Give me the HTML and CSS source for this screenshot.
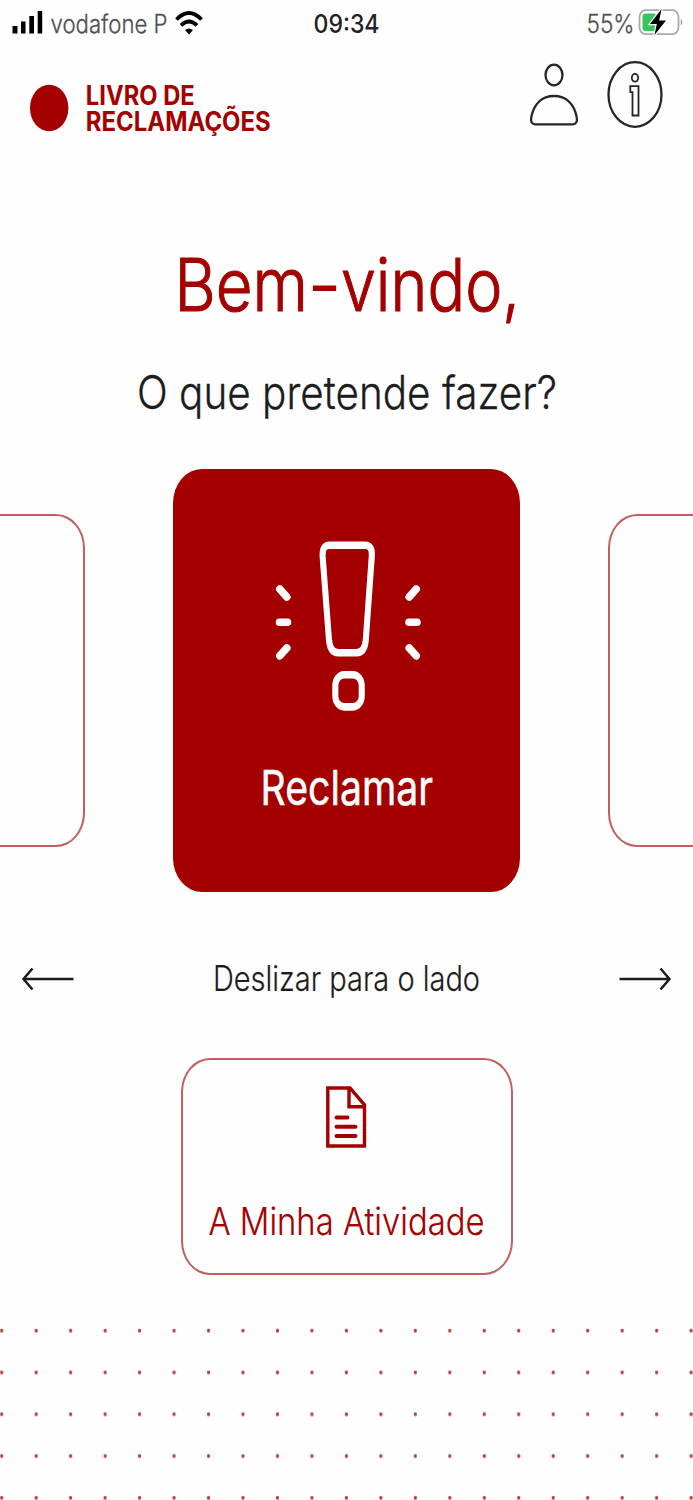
FILE: index.html
```html
<!DOCTYPE html>
<html lang="pt">
<head>
<meta charset="utf-8">
<title>Livro de Reclamações</title>
<link rel="stylesheet" href="styles.css">
</head>
<body>
<div class="screen">
  <div class="status">
    <svg class="status-left" width="220" height="48" viewBox="0 0 220 48">
      <path d="M12.500 26h5v7.500h-5zM21 21.500h4.500v12H21zM29.300 16h4.700v17.500h-4.700zM37.700 11h4.500v22.500h-4.500z"/>
      <text class="muted" x="50.500" y="32.500" font-size="25" textLength="117" lengthAdjust="spacingAndGlyphs">vodafone P</text>
      <path class="wifi" d="M176.500 19.500Q189 6.500 201.500 19.500M181 25.300Q189 17.500 197 25.300"/>
      <path d="M185 30Q189 27 193 30L189 34.500Z"/>
    </svg>
    <svg class="status-time" width="70" height="48" viewBox="0 0 70 48">
      <text class="time" x="1.500" y="32.600" font-size="25" textLength="66" lengthAdjust="spacingAndGlyphs">09:34</text>
    </svg>
    <svg class="status-right" width="110" height="48" viewBox="0 0 110 48">
      <text class="muted" x="3.500" y="32.700" font-size="25.500" textLength="48" lengthAdjust="spacingAndGlyphs">55%</text>
      <rect class="battery" x="56.500" y="10.200" width="39" height="24" rx="6" ry="7"/>
      <rect class="charge" x="59.500" y="13.500" width="14" height="17.500" rx="3"/>
      <path class="cap" d="M97.800 18.500q3 3.700 0 7.500z"/>
      <path class="bolt" d="M78.500 9L67 24h6.800L71.500 35 83 20.500h-6.800z"/>
    </svg>
  </div>

  <header class="header">
    <svg class="brand" width="260" height="70" viewBox="0 0 260 70">
      <ellipse cx="19.200" cy="38" rx="19.200" ry="23.300"/>
      <text x="55.800" y="35" font-size="26.500" textLength="109" lengthAdjust="spacingAndGlyphs">LIVRO DE</text>
      <text x="55.800" y="61" font-size="26.500" textLength="185" lengthAdjust="spacingAndGlyphs">RECLAMAÇÕES</text>
    </svg>
    <div class="actions">
      <svg class="line-icon" width="50" height="70" viewBox="0 0 50 70">
        <ellipse cx="25" cy="15" rx="8.500" ry="10.300"/>
        <path d="M6 64.300Q1 64 2.300 57C5 44 13 36 25 36S45 44 47.700 57Q49 64 44 64.300Z"/>
      </svg>
      <svg class="line-icon" width="58" height="70" viewBox="0 0 58 70">
        <ellipse cx="29" cy="34.500" rx="26.500" ry="32.300"/>
        <ellipse class="fine" cx="29" cy="17.800" rx="3.200" ry="3.900"/>
        <path class="fine" d="M24.300 26.200H32.500V55.500H26.500V32.200H24.300Z"/>
      </svg>
    </div>
  </header>

  <main class="main">
    <svg class="title" width="360" height="90" viewBox="0 0 360 90">
      <text x="7.500" y="70.500" font-size="73"><tspan textLength="133.500" lengthAdjust="spacingAndGlyphs">Bem</tspan><tspan textLength="33" lengthAdjust="spacingAndGlyphs">-</tspan><tspan textLength="179" lengthAdjust="spacingAndGlyphs">vindo,</tspan></text>
    </svg>
    <svg class="subtitle" width="440" height="60" viewBox="0 0 440 60">
      <text x="10" y="44" font-size="46" textLength="420" lengthAdjust="spacingAndGlyphs">O que pretende fazer?</text>
    </svg>

    <section class="carousel">
      <div class="side-card"></div>
      <div class="card">
        <svg class="alert" width="160" height="180" viewBox="0 0 160 180">
          <g class="mark" transform="translate(-.8 0) scale(.8 1)">
            <path d="M79 9.200H123.500Q133 9.200 132 20L124.500 104Q123 116.700 113 116.700H90Q80 116.700 78.500 104L70.500 20Q70 9.200 79 9.200Z"/>
            <rect x="86.400" y="138.700" width="33" height="32.200" rx="11"/>
          </g>
          <path class="ray" d="M12.800 53L19.800 61M12.500 86.300H20.500M19.800 112L12.800 119.800M149.200 53L142.200 61M142 86.300H150M142.200 112L149.200 119.800"/>
        </svg>
        <svg class="card-label" width="190" height="56" viewBox="0 0 190 56">
          <text x="8.500" y="42.500" font-size="48.500" textLength="172.500" lengthAdjust="spacingAndGlyphs">Reclamar</text>
        </svg>
      </div>
      <div class="side-card"></div>
    </section>

    <div class="swipe">
      <svg class="arrow" width="54" height="30" viewBox="0 0 54 30"><path d="M52.500 15H2.500M11.500 4.500L2.500 15L11.500 25.500"/></svg>
      <svg class="hint" width="280" height="48" viewBox="0 0 280 48">
        <text x="6" y="36" font-size="35" textLength="267" lengthAdjust="spacingAndGlyphs">Deslizar para o lado</text>
      </svg>
      <svg class="arrow" width="54" height="30" viewBox="0 0 54 30"><path d="M1.500 15H51.500M42.500 4.500L51.500 15L42.500 25.500"/></svg>
    </div>

    <section class="activity">
      <svg class="doc" width="41" height="62" viewBox="0 0 41 62">
        <path d="M1.800 2H24L38.500 19V60H1.800ZM23 2V20.700H38.500"/>
        <path class="doc-lines" d="M10.500 31.400H21.500M10.500 40.700H29.500M10.500 50H29.500"/>
      </svg>
      <svg class="activity-label" width="290" height="50" viewBox="0 0 290 50">
        <text x="6.500" y="37" font-size="37.500" textLength="276" lengthAdjust="spacingAndGlyphs">A Minha Atividade</text>
      </svg>
    </section>
  </main>

  <svg class="dots" width="693" height="190" viewBox="0 0 693 190">
    <defs>
      <pattern id="dot" x="-15.500" y="0" width="34.470" height="41.800" patternUnits="userSpaceOnUse">
        <ellipse cx="17.200" cy="20.700" rx="1.600" ry="2"/>
      </pattern>
    </defs>
    <rect width="693" height="190" fill="url(#dot)"/>
  </svg>
</div>
</body>
</html>
```
FILE: styles.css
```css
* { box-sizing: border-box; }
body {
  margin: 0;
  background: #fefefe;
  color: #1c1c1c;
  font-family: Inter, "Liberation Sans", sans-serif;
}
svg { display: block; flex: none; overflow: visible; }
.screen {
  width: 693px;
  height: 1500px;
  overflow: hidden;
  display: flex;
  flex-direction: column;
}
.status {
  height: 48px;
  display: grid;
  grid-template-columns: 312px 271px 110px;
}
.muted { fill: #505050; stroke: #505050; stroke-width: 0.3; font-weight: 300; }
.time { fill: #222; font-weight: 500; }
.wifi { fill: none; stroke: #000; stroke-width: 3.8; }
.battery { fill: none; stroke: #aaa; stroke-width: 1.8; }
.charge { fill: #35c759; }
.cap { fill: #999; }
.bolt { fill: #000; stroke: #fefefe; stroke-width: 2.5; paint-order: stroke; }
.header {
  height: 90px;
  padding: 12px 29px 0 30px;
  display: flex;
  justify-content: space-between;
}
.brand { fill: #a50000; font-weight: 700; margin-top: 10px; }
.actions { display: flex; gap: 27px; margin-right: 0.5px; }
.line-icon { fill: none; stroke: #262626; stroke-width: 2.3; }
.fine { stroke-width: 1.8; }
.main {
  display: flex;
  flex-direction: column;
  align-items: center;
}
.title { fill: #a50000; stroke: #a50000; stroke-width: 1.1; font-weight: 300; margin-top: 102px; }
.subtitle { fill: #1c1c1c; stroke: #1c1c1c; stroke-width: 0.3; font-weight: 300; margin-top: 35px; }
.carousel {
  width: 693px;
  margin-top: 44px;
  display: flex;
  justify-content: center;
  align-items: center;
  gap: 88px;
}
.side-card {
  flex: none;
  width: 332px;
  height: 333px;
  border: 2px solid #c06060;
  border-radius: 29px / 34px;
}
.card {
  flex: none;
  width: 347px;
  height: 423px;
  padding-top: 67px;
  border-radius: 29px / 34px;
  background: #a50000;
  display: flex;
  flex-direction: column;
  align-items: center;
}
.alert { fill: none; stroke: #fff; stroke-linecap: round; }
.mark { stroke-width: 7.6; }
.ray { stroke-width: 7.6; }
.card-label { fill: #fff; stroke: #fff; stroke-width: 0.5; font-weight: 400; margin-top: 46px; }
.swipe {
  width: 693px;
  padding: 0 21px;
  margin-top: 63px;
  display: flex;
  justify-content: space-between;
  align-items: center;
}
.arrow { fill: none; stroke: #1c1c1c; stroke-width: 2.5; }
.hint { fill: #1c1c1c; stroke: #1c1c1c; stroke-width: 0.2; font-weight: 300; }
.activity {
  width: 332px;
  height: 217px;
  margin-top: 54.5px;
  padding-top: 26px;
  border: 2px solid #c06060;
  border-radius: 29px / 34px;
  display: flex;
  flex-direction: column;
  align-items: center;
}
.doc { fill: none; stroke: #a50000; stroke-width: 3.4; }
.doc-lines { stroke-width: 4; stroke-linecap: round; }
.activity-label { fill: #a50000; stroke: #a50000; stroke-width: 0.2; font-weight: 300; margin-top: 50px; }
.dots { margin-top: 35.5px; fill: #b83a3a; }
```
